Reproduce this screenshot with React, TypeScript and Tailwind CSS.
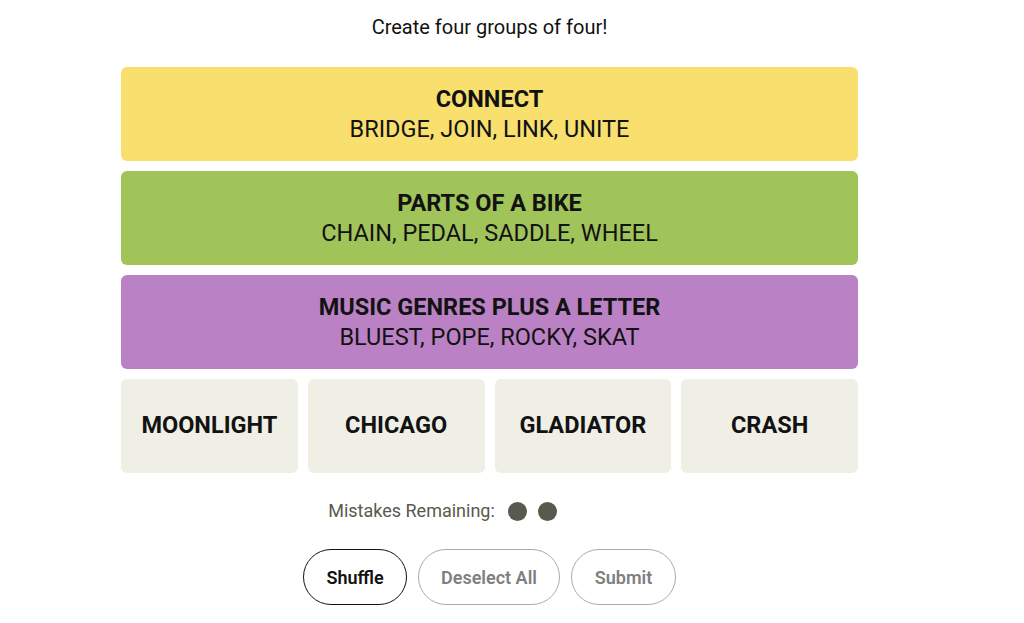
import React from 'react';

const solved = [
  { title: 'CONNECT', words: 'BRIDGE, JOIN, LINK, UNITE', color: 'bg-[#f9df6d]' },
  { title: 'PARTS OF A BIKE', words: 'CHAIN, PEDAL, SADDLE, WHEEL', color: 'bg-[#a0c35a]' },
  { title: 'MUSIC GENRES PLUS A LETTER', words: 'BLUEST, POPE, ROCKY, SKAT', color: 'bg-[#ba81c5]' },
];

const remaining = ['MOONLIGHT', 'CHICAGO', 'GLADIATOR', 'CRASH'];

export default function App() {
  return (
    <div className="w-[979px] bg-white pt-[13px] font-['Roboto',sans-serif] text-[#121212]">
      <div className="flex flex-col items-center">
        <p className="text-[20px] leading-[28px]">Create four groups of four!</p>

        <div className="mt-[26px] flex w-[737px] flex-col gap-[10px]">
          {solved.map((g) => (
            <div
              key={g.title}
              className={`flex h-[94px] flex-col items-center justify-center rounded-md ${g.color}`}
            >
              <div className="text-[23.5px] font-bold leading-[30px]">{g.title}</div>
              <div className="text-[23.5px] leading-[30px]">{g.words}</div>
            </div>
          ))}
          <div className="grid grid-cols-4 gap-[10px]">
            {remaining.map((w) => (
              <div
                key={w}
                className="flex h-[94px] items-center justify-center rounded-md bg-[#efefe6] text-[23.5px] font-bold"
              >
                {w}
              </div>
            ))}
          </div>
        </div>

        <div className="mt-[25px] flex items-center gap-[13px] text-[18px] leading-[26px] text-[#5a594e]">
          <span>Mistakes Remaining:</span>
          <div className="flex w-[143px] items-center gap-[11px]">
            <span className="h-[19px] w-[19px] rounded-full bg-[#5a594e]" />
            <span className="h-[19px] w-[19px] rounded-full bg-[#5a594e]" />
          </div>
        </div>

        <div className="mt-[25px] flex gap-[11px] text-[18px] font-semibold">
          <button className="h-[56px] w-[104px] rounded-full border border-[#121212] text-[#121212]">
            Shuffle
          </button>
          <button className="h-[56px] w-[142px] rounded-full border border-[#aaaaaa] text-[#7f7f7f]">
            Deselect All
          </button>
          <button className="h-[56px] w-[105px] rounded-full border border-[#aaaaaa] text-[#7f7f7f]">
            Submit
          </button>
        </div>
      </div>
    </div>
  );
}
